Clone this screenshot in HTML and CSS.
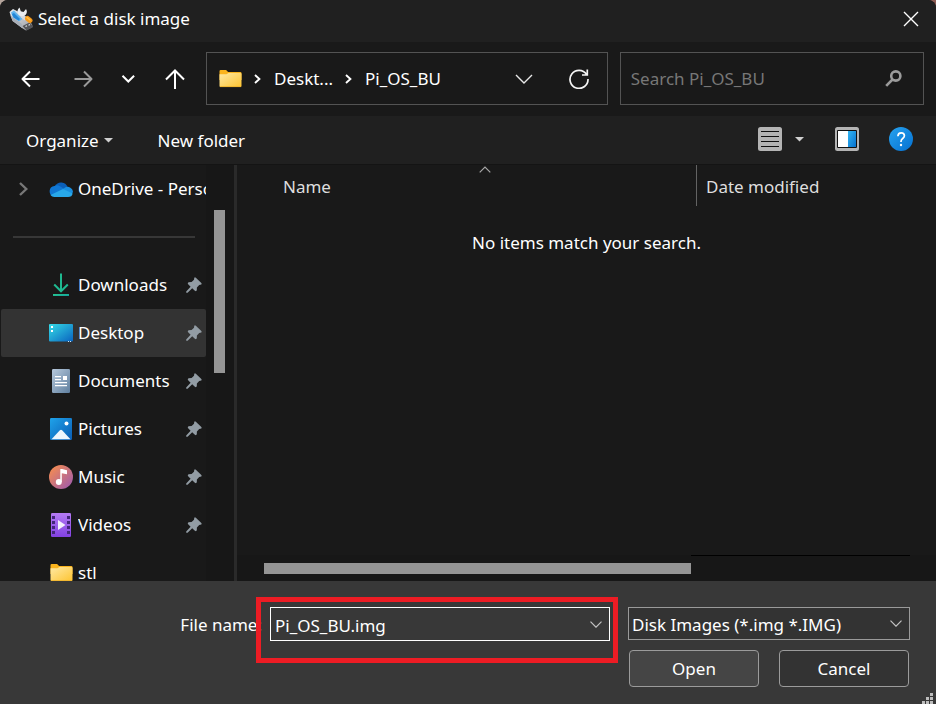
FILE: index.html
```html
<!DOCTYPE html>
<html lang="en">
<head>
<meta charset="utf-8">
<meta name="viewport" content="width=device-width, initial-scale=1">
<title>Select a disk image</title>
<link rel="stylesheet" href="styles.css">
</head>
<body>
<svg class="defs" width="0" height="0" aria-hidden="true">
  <defs>
    <linearGradient id="g-folder" x1="0" y1="0" x2="1" y2="1"><stop offset="0" stop-color="#ffe9a4"/><stop offset="1" stop-color="#fdc431"/></linearGradient>
    <linearGradient id="g-down" x1="0" y1="0" x2="1" y2="1"><stop offset="0" stop-color="#2bc98c"/><stop offset="1" stop-color="#0e9fa0"/></linearGradient>
    <linearGradient id="g-desk" x1="0" y1="0" x2="1" y2="1"><stop offset="0" stop-color="#35dbe6"/><stop offset="1" stop-color="#0a63bf"/></linearGradient>
    <linearGradient id="g-doc" x1="0" y1="0" x2="1" y2="1"><stop offset="0" stop-color="#b7c9dc"/><stop offset="1" stop-color="#5f7f9f"/></linearGradient>
    <linearGradient id="g-pic" x1="0" y1="0" x2="1" y2="1"><stop offset="0" stop-color="#1fa3ea"/><stop offset="1" stop-color="#0a5cb4"/></linearGradient>
    <linearGradient id="g-music" x1="0" y1="0" x2="1" y2="1"><stop offset="0.1" stop-color="#f38b52"/><stop offset="1" stop-color="#9a58b4"/></linearGradient>
    <linearGradient id="g-video" x1="0" y1="0" x2="0" y2="1"><stop offset="0" stop-color="#b57bf4"/><stop offset="1" stop-color="#8241e2"/></linearGradient>
    <linearGradient id="g-pane" x1="0" y1="0" x2="1" y2="1"><stop offset="0" stop-color="#33b5f2"/><stop offset="1" stop-color="#0672cf"/></linearGradient>
    <linearGradient id="g-help" x1="0" y1="0" x2="1" y2="1"><stop offset="0" stop-color="#27a2ee"/><stop offset="1" stop-color="#0571d2"/></linearGradient>
    <linearGradient id="g-usb" x1="0" y1="0" x2="1" y2="1"><stop offset="0" stop-color="#e8edf2"/><stop offset="1" stop-color="#9a9aa0"/></linearGradient>
    <symbol id="pin" viewBox="0 0 16 16"><path d="M9.6 0.4 15.6 6.2 15.4 7.6 13.2 8 10.9 10.4 10.8 13.6 9.4 14.3 6.2 11.2 1.6 15.8 0.2 15.8 0.2 14.4 4.6 9.7 1.7 6.7 2.4 5.3 5.6 5.1 8 2.8 8.3 0.6Z" fill="#929ca4"/></symbol>
    <symbol id="folder" viewBox="0 0 22 18"><path d="M0 1.2Q0 0 1.2 0H6.6L8.6 2H20.8Q22 2 22 3.2V10H0Z" fill="#fbb41d"/><path d="M0 4.2H7L9 3H21Q22 3 22 4V16Q22 17 21 17H1Q0 17 0 16Z" fill="url(#g-folder)"/><path d="M0.6 16.6H21.4" stroke="#efb32b" stroke-width="0.9"/></symbol>
  </defs>
</svg>

<main class="dialog">
  <header class="titlebar">
    <svg class="app-icon" width="24" height="24" viewBox="0 0 24 24" aria-hidden="true">
      <path d="M0.5 5 4 2 10 5 19 14 23 17 23.500 20 17 23.500 13 21 3.500 14Z" fill="url(#g-usb)"/>
      <path d="M2 5.500 5 3.500 13.500 12 10 14.500 4 10.500Z" fill="#5fb4ee"/>
      <path d="M3 7 5 6 11 12 9.500 13.500 4.500 10.500Z" fill="#2385d6"/>
      <path d="M1 8 4 14 13 21 13 17 4.500 11Z" fill="#a9afb8"/>
      <path d="M13.500 19 20.500 15.500 23.500 18.500 23.500 20.500 17.500 23.500Z" fill="#55565a"/>
      <path d="M16.500 19.500 18 18.800M19.500 18.200 21 17.500" stroke="#e5e5e5" stroke-width="1.200"/>
      <path d="M12.500 8.500 17 12" stroke="#d7dade" stroke-width="3.600"/>
      <path d="M10.500 0.500A5 5 0 0 0 9.500 7.500 5 5 0 0 0 16.500 8 5 5 0 0 0 17 2L14.500 5 11.800 4.200Z" fill="#e9ecef"/>
      <path d="M18.500 11.500 21 13.500" stroke="#f7991a" stroke-width="5" stroke-linecap="round"/>
      <path d="M18 10.500 21 13" stroke="#ffc043" stroke-width="1.500" stroke-linecap="round"/>
    </svg>
    <h1>Select a disk image</h1>
    <button class="close" type="button" aria-label="Close">
      <svg width="16" height="16" viewBox="0 0 16 16"><path d="M1 1 15 15M15 1 1 15" stroke="#fff" stroke-width="1.400" fill="none"/></svg>
    </button>
  </header>

  <nav class="navbar" aria-label="Location">
    <button class="nav-btn" type="button" aria-label="Back">
      <svg width="20" height="18" viewBox="0 0 20 18"><path d="M19.500 9H2.500M10 1.500 2.500 9 10 16.500" fill="none" stroke="#fff" stroke-width="2" stroke-linejoin="round"/></svg>
    </button>
    <button class="nav-btn" type="button" aria-label="Forward" disabled>
      <svg width="20" height="18" viewBox="0 0 20 18"><path d="M1.500 9H18.500M11 1.500 18.500 9 11 16.500" fill="none" stroke="#9a9a9a" stroke-width="2" stroke-linejoin="round"/></svg>
    </button>
    <button class="nav-btn recent" type="button" aria-label="Recent locations">
      <svg width="14" height="10" viewBox="0 0 14 10"><path d="M1.500 1.700 7.300 7.500 13.100 1.700" fill="none" stroke="#fff" stroke-width="2"/></svg>
    </button>
    <button class="nav-btn up" type="button" aria-label="Up one level">
      <svg width="20" height="20" viewBox="0 0 20 20"><path d="M10 20V2M1 10.500 10 1.500 19 10.500" fill="none" stroke="#fff" stroke-width="2"/></svg>
    </button>
    <div class="address">
      <svg width="23" height="18" aria-hidden="true"><use href="#folder"/></svg>
      <svg class="crumb-sep" width="7" height="10" viewBox="0 0 7 10" aria-hidden="true"><path d="M1 1 5.400 5 1 9" fill="none" stroke="#fff" stroke-width="1.900"/></svg>
      <a href="#desktop">Deskt...</a>
      <svg class="crumb-sep" width="7" height="10" viewBox="0 0 7 10" aria-hidden="true"><path d="M1 1 5.400 5 1 9" fill="none" stroke="#fff" stroke-width="1.900"/></svg>
      <a href="#pi">Pi_OS_BU</a>
      <button class="history" type="button" aria-label="Previous locations">
        <svg width="18" height="10" viewBox="0 0 18 10"><path d="M1 1 9 9 17 1" fill="none" stroke="#e8e8e8" stroke-width="1.400"/></svg>
      </button>
      <button class="refresh" type="button" aria-label="Refresh">
        <svg width="20" height="20" viewBox="0 0 20 20"><path d="M17.500 5.400A9 9 0 1 0 19 10M18.300 0.500V6H13" fill="none" stroke="#f4f4f4" stroke-width="1.700"/></svg>
      </button>
    </div>
    <div class="search">
      <input type="search" aria-label="Search Pi_OS_BU" placeholder="Search Pi_OS_BU">
      <svg width="17" height="17" viewBox="0 0 17 17" aria-hidden="true"><circle cx="10.800" cy="6" r="4.600" fill="none" stroke="#9b9b9b" stroke-width="2.600"/><path d="M7.500 9.500 1.200 15.800" stroke="#9b9b9b" stroke-width="2.600"/></svg>
    </div>
  </nav>

  <div class="toolbar">
    <button type="button">Organize <svg width="9" height="5" viewBox="0 0 9 5" aria-hidden="true"><path d="M0 0H9L4.500 4.500Z" fill="#d0d0d0"/></svg></button>
    <button type="button" class="new-folder">New folder</button>
    <div class="tools">
      <button type="button" aria-label="Change your view">
        <svg width="24" height="24" viewBox="0 0 24 24"><rect width="24" height="24" rx="2.500" fill="#b4b4b4"/><path d="M3 4.500H21M3 9.500H21M3 14.500H21M3 19.500H21" stroke="#111" stroke-width="1"/></svg>
      </button>
      <button type="button" class="view-more" aria-label="More view options">
        <svg width="9" height="5" viewBox="0 0 9 5"><path d="M0 0H9L4.500 4.500Z" fill="#d0d0d0"/></svg>
      </button>
      <button type="button" class="preview" aria-label="Show the preview pane">
        <svg width="24" height="24" viewBox="0 0 24 24"><rect width="24" height="24" rx="2.500" fill="#b4b4b4"/><rect x="2" y="3" width="20" height="18" rx="1" fill="#111"/><path d="M3 4H13V20H3Z" fill="#fff"/><path d="M13 4H21V20H13Z" fill="url(#g-pane)"/></svg>
      </button>
      <button type="button" class="help" aria-label="Get help">
        <svg width="24" height="24" viewBox="0 0 24 24"><circle cx="12" cy="12" r="12" fill="url(#g-help)"/><path d="M8.900 9.200Q9 5.800 12.200 5.800T15.400 8.800Q15.400 10.200 13.700 11.500T12 14.400V15" fill="none" stroke="#fff" stroke-width="1.700"/><circle cx="12" cy="18" r="1.200" fill="#fff"/></svg>
      </button>
    </div>
  </div>

  <div class="browser">
    <aside class="sidebar">
      <ul class="places">
        <li>
          <svg class="expander" width="9" height="14" viewBox="0 0 9 14" aria-hidden="true"><path d="M1 1 7.300 7 1 13" fill="none" stroke="#777" stroke-width="2.400"/></svg>
          <a href="#onedrive">
            <span class="icon"><svg width="24" height="16" viewBox="0 0 24 16"><path d="M6 5A7 7 0 0 1 18.600 6L13 11Z" fill="#0b5fb8"/><path d="M5.500 5Q8 3.500 11 5.200L17 9 5 15.500A5.300 5.300 0 0 1 5.500 5Z" fill="#1077d3"/><path d="M14 8Q18 4.500 21 6.500 24 8 24 11.500L20 13Z" fill="#1a8fe0"/><path d="M1.500 14 14 8 23.700 12.500Q23 16 19 16H5.500Q2.800 16 1.500 14Z" fill="#28a8ea"/></svg></span>
            <span class="label">OneDrive - Personal</span>
          </a>
        </li>
        <li class="separator" role="separator"></li>
        <li>
          <a href="#downloads">
            <span class="icon"><svg width="18" height="24" viewBox="0 0 18 24"><path d="M9 0.500V18M2.200 11.500 9 18.300 15.800 11.500" fill="none" stroke="#1fb990" stroke-width="2"/><path d="M1 21H17V23H1Z" fill="url(#g-down)"/></svg></span>
            <span class="label">Downloads</span>
          </a>
          <svg class="pin" width="16" height="16" aria-hidden="true"><use href="#pin"/></svg>
        </li>
        <li class="selected">
          <a href="#desktop">
            <span class="icon"><svg width="24" height="18" viewBox="0 0 24 18"><rect width="24" height="17.500" rx="1" fill="url(#g-desk)"/><path d="M2 2H4V4H2ZM2 6H4V8H2Z" fill="#fff"/><path d="M19 17H20V18H19ZM21 17H22V18H21Z" fill="#cfe6fa"/></svg></span>
            <span class="label">Desktop</span>
          </a>
          <svg class="pin" width="16" height="16" aria-hidden="true"><use href="#pin"/></svg>
        </li>
        <li>
          <a href="#documents">
            <span class="icon"><svg width="18" height="24" viewBox="0 0 18 24"><rect width="18" height="24" rx="1.200" fill="url(#g-doc)"/><path d="M3 7H9V8.200H3ZM3 10H9V11.200H3ZM11 7H15V11H11ZM3 13H15V14.200H3ZM3 16H15V17.200H3Z" fill="#fff"/></svg></span>
            <span class="label">Documents</span>
          </a>
          <svg class="pin" width="16" height="16" aria-hidden="true"><use href="#pin"/></svg>
        </li>
        <li>
          <a href="#pictures">
            <span class="icon"><svg width="22" height="22" viewBox="0 0 22 22"><rect width="22" height="22" rx="1.200" fill="url(#g-pic)"/><circle cx="16.500" cy="5.500" r="2" fill="#fff"/><path d="M1.500 21.200 9.900 12.300Q11 11.200 12.100 12.300L20.500 21.200Z" fill="#eef6fd"/></svg></span>
            <span class="label">Pictures</span>
          </a>
          <svg class="pin" width="16" height="16" aria-hidden="true"><use href="#pin"/></svg>
        </li>
        <li>
          <a href="#music">
            <span class="icon"><svg width="24" height="24" viewBox="0 0 24 24"><circle cx="12" cy="12" r="12" fill="url(#g-music)"/><circle cx="9.800" cy="17" r="3" fill="#fff"/><path d="M11.300 17V4H13L18 5.200V9.200L12.800 8.200V17Z" fill="#fff"/></svg></span>
            <span class="label">Music</span>
          </a>
          <svg class="pin" width="16" height="16" aria-hidden="true"><use href="#pin"/></svg>
        </li>
        <li>
          <a href="#videos">
            <span class="icon"><svg width="20" height="24" viewBox="0 0 20 24"><rect width="20" height="24" rx="1.200" fill="url(#g-video)"/><path d="M1 3H4V6H1ZM1 8H4V11H1ZM1 13H4V16H1ZM1 18H4V21H1ZM16 3H19V6H16ZM16 8H19V11H16ZM16 13H19V16H16ZM16 18H19V21H16Z" fill="#43267a"/><path d="M7 7 14.500 12 7 17Z" fill="#f4effc"/></svg></span>
            <span class="label">Videos</span>
          </a>
          <svg class="pin" width="16" height="16" aria-hidden="true"><use href="#pin"/></svg>
        </li>
        <li>
          <a href="#stl">
            <span class="icon"><svg width="23" height="18"><use href="#folder"/></svg></span>
            <span class="label">stl</span>
          </a>
        </li>
      </ul>
      <div class="side-scroll"><div class="side-thumb"></div></div>
    </aside>

    <section class="files">
      <div class="columns">
        <button type="button" class="col-name">Name
          <svg class="sort" width="12" height="7" viewBox="0 0 12 7" aria-hidden="true"><path d="M0.700 6.300 6 1 11.300 6.300" fill="none" stroke="#a8a8a8" stroke-width="1.200"/></svg>
        </button>
        <button type="button" class="col-date">Date modified</button>
      </div>
      <p class="empty">No items match your search.</p>
      <div class="h-scroll"><div class="h-thumb"></div><div class="h-rest"></div></div>
    </section>
  </div>

  <form class="footer">
    <label class="name-label" for="filename">File name:</label>
    <div class="combo">
      <input id="filename" type="text" value="Pi_OS_BU.img">
      <button type="button" aria-label="Show file names"><svg width="12" height="7" viewBox="0 0 12 7"><path d="M0.500 0.700 6 6.200 11.500 0.700" fill="none" stroke="#c4c4c4" stroke-width="1.200"/></svg></button>
      <div class="highlight"></div>
    </div>
    <div class="type">
      <select aria-label="Files of type"><option>Disk Images (*.img *.IMG)</option></select>
      <svg width="12" height="7" viewBox="0 0 12 7" aria-hidden="true"><path d="M0.500 0.700 6 6.200 11.500 0.700" fill="none" stroke="#c4c4c4" stroke-width="1.200"/></svg>
    </div>
    <div class="actions">
      <button type="button" class="open">Open</button>
      <button type="button">Cancel</button>
    </div>
    <svg class="grip" width="12" height="12" viewBox="0 0 12 12" aria-hidden="true"><path d="M8 0H11V3H8ZM4 4H7V7H4ZM8 4H11V7H8ZM0 8H3V11H0ZM4 8H7V11H4ZM8 8H11V11H8Z" fill="#bdbdbd"/></svg>
  </form>
</main>
</body>
</html>
```

FILE: styles.css
```css
* {
  box-sizing: border-box;
}

body {
  margin: 0;
  background: linear-gradient(90deg, #b5a59c, #8c5a52);
  color: #fff;
  font: 17px/24px "Noto Sans", "Open Sans", sans-serif;
}

button,
input,
select {
  margin: 0;
  padding: 0;
  border: 0;
  background: none;
  color: inherit;
  font: inherit;
}

a {
  color: inherit;
  text-decoration: none;
}

svg {
  display: block;
  flex: none;
}

.defs {
  position: absolute;
}

.dialog {
  display: flex;
  flex-direction: column;
  height: 100vh;
  overflow: hidden;
  border-radius: 8px 8px 0 0;
  background: #191919;
}

/* Title bar */
.titlebar {
  display: flex;
  flex: none;
  align-items: center;
  gap: 5px;
  height: 42px;
  padding: 0 8px 4px 9px;
  background: #202020;
}

.titlebar h1 {
  flex: 1;
  margin: 0;
  font-size: 17px;
  font-weight: 400;
}

.close {
  display: grid;
  place-items: center;
  width: 34px;
  height: 34px;
}

/* Navigation row */
.navbar {
  display: flex;
  flex: none;
  gap: 5px;
  height: 74px;
  padding: 10px 12px 11px 6px;
}

.nav-btn {
  display: grid;
  flex: none;
  place-items: center;
  width: 48px;
}

.recent {
  width: 32px;
}

.up {
  width: 52px;
}

.address,
.search {
  display: flex;
  align-items: center;
  min-width: 0;
  border: 1px solid #535353;
}

.address {
  flex: 7;
  padding: 0 8px 0 12px;
}

.address a {
  white-space: nowrap;
}

.crumb-sep {
  margin: 0 13px 0 12px;
}

.history {
  display: grid;
  place-items: center;
  width: 54px;
  height: 48px;
  margin-left: auto;
}

.refresh {
  display: grid;
  place-items: center;
  width: 40px;
  height: 48px;
  margin-left: 8px;
}

.search {
  flex: 5;
  margin-left: 7px;
  padding: 0 21px 0 10px;
}

.search input {
  flex: 1;
  min-width: 0;
  outline: 0;
}

.search input::placeholder {
  color: #777;
  opacity: 1;
}

/* Command bar */
.toolbar {
  display: flex;
  flex: none;
  align-items: center;
  height: 48px;
  padding: 1px 23px 0 26px;
  background: #202020;
}

.toolbar button {
  display: flex;
  align-items: center;
  gap: 5px;
}

.toolbar .new-folder {
  margin-left: 45px;
}

.tools {
  display: flex;
  align-items: center;
  margin-left: auto;
  padding-bottom: 3px;
}

.tools .view-more {
  margin-left: 13px;
}

.tools .preview {
  margin-left: 31px;
}

.tools .help {
  margin-left: 30px;
}

/* Places and file list */
.browser {
  display: flex;
  flex: 1;
  min-height: 0;
  border-top: 1px solid #141414;
}

.sidebar {
  display: flex;
  flex: none;
  width: 237px;
  overflow: hidden;
  border-right: 3px solid #2a2a2a;
}

.places {
  width: 206px;
  margin: 0;
  padding: 0 0 0 1px;
  list-style: none;
}

.places li {
  position: relative;
  display: flex;
  align-items: center;
  height: 48px;
  padding: 0 4px 0 48px;
  border-radius: 2px;
}

.places li:first-child {
  padding-right: 0;
}

.places .selected {
  background: #333;
}

.places a {
  display: flex;
  flex: 1;
  align-items: center;
  gap: 5px;
  min-width: 0;
}

.icon {
  display: grid;
  flex: none;
  place-items: center;
  width: 24px;
  height: 24px;
}

.label {
  overflow: hidden;
  white-space: nowrap;
}

.expander {
  position: absolute;
  left: 18px;
}

.places .separator::before {
  content: "";
  width: 182px;
  height: 2px;
  margin-left: -36px;
  background: #373737;
}

.side-scroll {
  flex: 1;
  padding: 45px 0 0 8px;
  background: #171717;
}

.side-thumb {
  width: 11px;
  height: 163px;
  background: #959595;
}

.files {
  display: flex;
  flex: 1;
  flex-direction: column;
  min-width: 0;
}

.columns {
  display: flex;
  height: 41px;
  color: #dedede;
}

.columns button {
  padding-top: 2px;
  text-align: left;
}

.col-name {
  position: relative;
  width: 460px;
  padding-left: 46px;
  border-right: 1px solid #636363;
}

.sort {
  position: absolute;
  top: 1px;
  left: 242px;
}

.col-date {
  padding-left: 9px;
}

.empty {
  margin: 0;
  padding-top: 25px;
  text-align: center;
}

.h-scroll {
  display: flex;
  height: 26px;
  margin-top: auto;
  padding: 0 26px 0 27px;
  background: #171717;
}

.h-thumb {
  flex: 0 1 427px;
  height: 11px;
  margin-top: 8px;
  background: #959595;
}

.h-rest {
  flex: 1;
  border-top: 1px solid #000;
}

/* File name, type and actions */
.footer {
  position: relative;
  display: grid;
  flex: none;
  grid-template-columns: 262px 1fr 282px;
  gap: 10px 0;
  padding: 26px 26px 17px 0;
  background: #383838;
}

.name-label {
  padding-top: 6px;
  text-align: right;
}

.combo {
  position: relative;
  display: flex;
  align-items: center;
  height: 34px;
  margin: 0 18px 0 8px;
  border: 1px solid #fff;
}

.combo input {
  flex: 1;
  min-width: 0;
  padding: 3px 0 0 4px;
  outline: 0;
}

.combo button {
  display: grid;
  place-items: center;
  width: 26px;
  height: 32px;
}

.highlight {
  position: absolute;
  inset: -11px -9px -23px -15px;
  border: 5px solid #ed1c24;
  pointer-events: none;
}

.type {
  position: relative;
}

.type select {
  width: 100%;
  height: 33px;
  padding: 3px 30px 0 3px;
  border: 1px solid #9a9a9a;
  background: #333;
  appearance: none;
}

.type svg {
  position: absolute;
  top: 13px;
  right: 8px;
  pointer-events: none;
}

.actions {
  display: grid;
  grid-column: 3;
  grid-template-columns: 1fr 1fr;
  gap: 20px;
  margin-top: -1px;
  padding: 0 1px;
}

.actions button {
  height: 37px;
  padding-top: 1px;
  border: 1px solid #9b9b9b;
  border-radius: 4px;
  background: #333;
}

.actions .open {
  background: #454545;
}

.grip {
  position: absolute;
  right: 2px;
  bottom: -1px;
}
```
